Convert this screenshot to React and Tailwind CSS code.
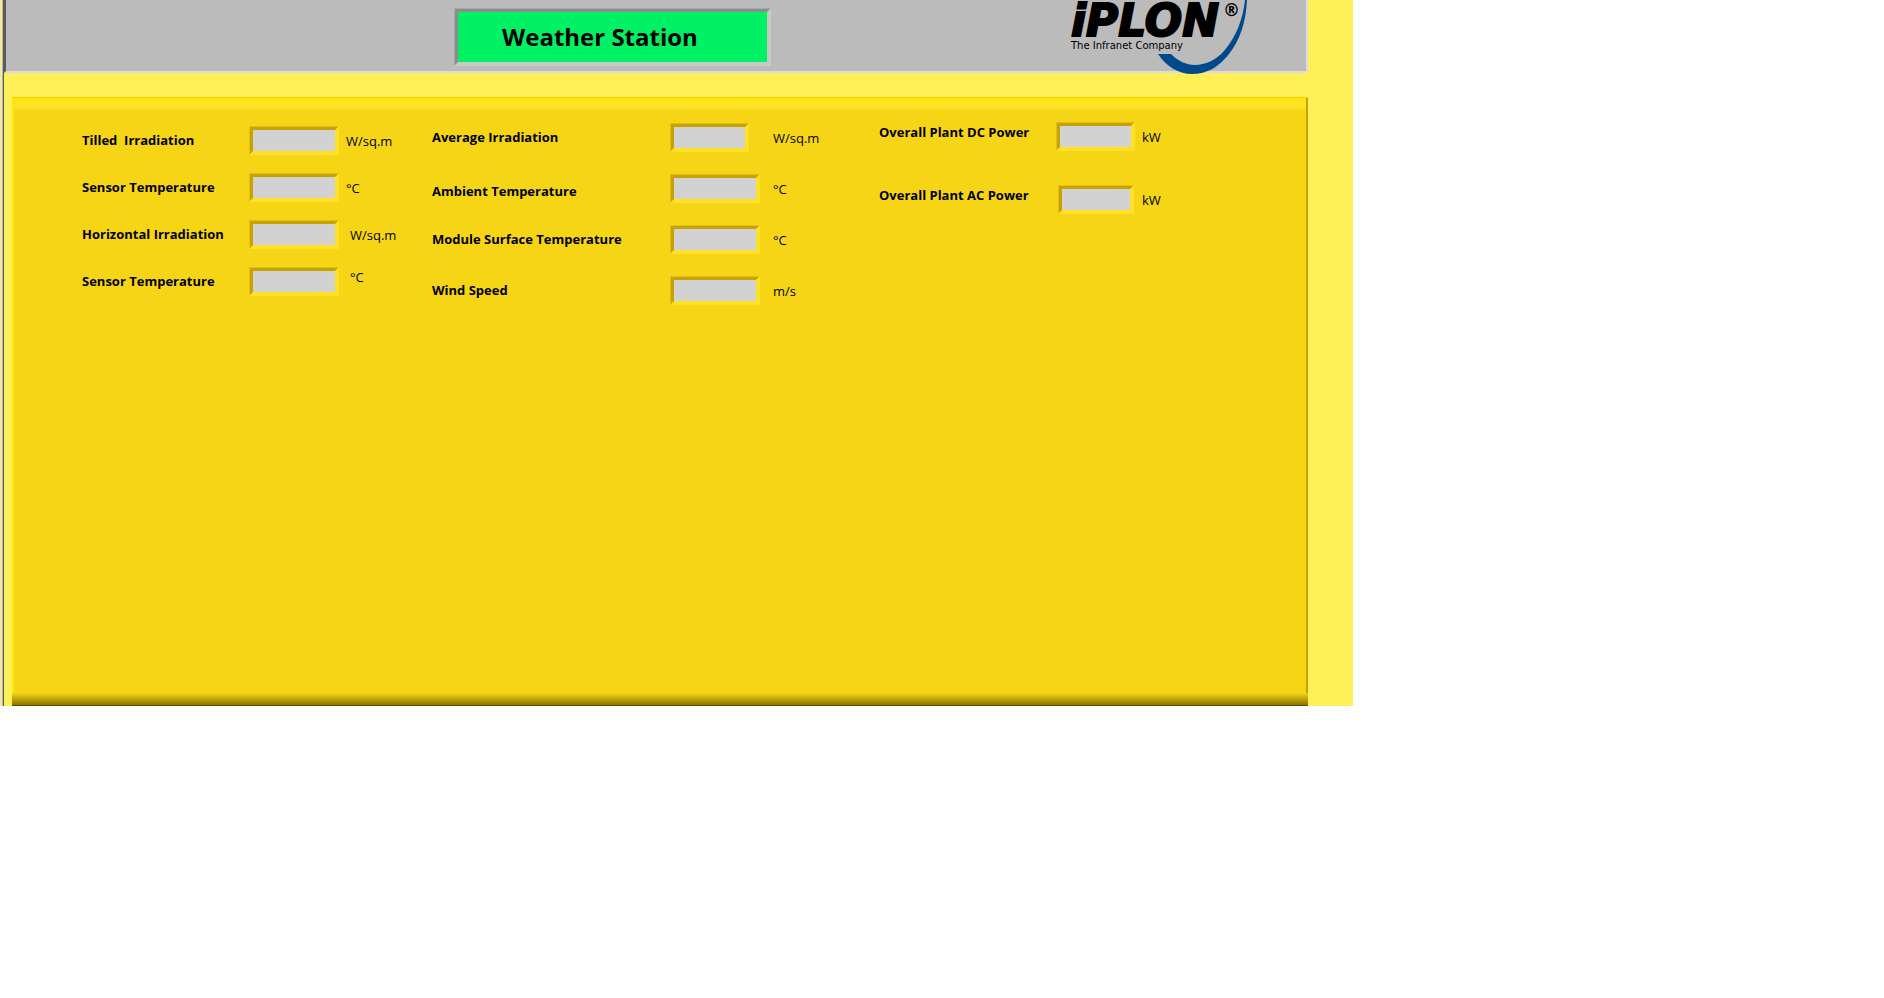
const groups = [
  {
    id: "radiation",
    column: "w-[350px] ml-[68px] mt-[27px] gap-[18px]",
    grid: "grid-cols-[167px_90px_auto]",
    unitGap: "pl-[7px]",
    rows: [
      { label: "Tilled  Irradiation", unit: "W/sq.m" },
      { label: "Sensor Temperature", unit: "°C" },
      { label: "Horizontal Irradiation", unit: "W/sq.m", unitClass: "ml-1" },
      { label: "Sensor Temperature", unit: "°C", unitClass: "ml-1 self-start" },
    ],
  },
  {
    id: "ambient",
    column: "w-[447px] mt-6 gap-[22px]",
    grid: "grid-cols-[238px_90px_auto]",
    unitGap: "pl-[13px]",
    rows: [
      { label: "Average Irradiation", unit: "W/sq.m", boxClass: "w-[79px]" },
      { label: "Ambient Temperature", unit: "°C", labelClass: "self-end" },
      { label: "Module Surface Temperature", unit: "°C" },
      { label: "Wind Speed", unit: "m/s" },
    ],
  },
  {
    id: "power",
    column: "mt-[23px] gap-[34px]",
    grid: "grid-cols-[177px_79px_auto]",
    unitGap: "pl-[7px]",
    rows: [
      { label: "Overall Plant DC Power", unit: "kW", labelClass: "self-start" },
      { label: "Overall Plant AC Power", unit: "kW", labelClass: "self-start", boxClass: "w-[76px] mx-auto" },
    ],
  },
];

function Reading({ id, row, grid, unitGap }) {
  return (
    <div className={`grid h-[29px] items-center ${grid}`}>
      <label
        htmlFor={id}
        className={`pb-0.5 text-[13px] leading-5 font-bold whitespace-pre ${row.labelClass ?? ""}`}
      >
        {row.label}
      </label>
      <div
        className={`h-[29px] border border-t-[#e3c00f] border-r-[#ffe226] border-b-[#ffe226] border-l-[#e3c00f] ${row.boxClass ?? ""}`}
      >
        <input
          id={id}
          type="text"
          readOnly
          className="block h-full w-full border-[3px] border-t-[#c6a300] border-r-[#ffe226] border-b-[#ffe226] border-l-[#c6a300] bg-[#d2d2d2] outline-none"
        />
      </div>
      <span className={`text-[13px] leading-5 whitespace-nowrap ${unitGap} ${row.unitClass ?? ""}`}>{row.unit}</span>
    </div>
  );
}

function Logo() {
  return (
    <div className="absolute top-0 right-[59px] h-[75px] w-[176px]">
      <svg className="absolute top-0 right-0" width="178" height="75" viewBox="0 0 178 75" aria-hidden="true">
        <path
          fill="#004a8c"
          d="M89 54H102C109 61 117 65 126 65C136 65 147 60 155 51C167 37 174 19 176 0H178C177 22 171 40 160 54C150 67 138 74 123 74C109 74 97 66 89 54Z"
        />
      </svg>
      <div className="relative flex h-10 items-start gap-1 font-['DejaVu_Sans',sans-serif] italic">
        <span className="text-[44px] leading-[42px] font-bold [-webkit-text-stroke:2px_black]">iPLON</span>
        <span className="text-[17px] leading-5 font-bold">®</span>
      </div>
      <div className="relative font-['DejaVu_Sans',sans-serif] text-[10px] leading-3">The Infranet Company</div>
    </div>
  );
}

export default function App() {
  return (
    <div className="min-h-screen bg-white pr-[531px] font-['Open_Sans','Noto_Sans',sans-serif] text-black">
      <div className="flex bg-[#fff05a]">
        <div className="ml-px w-px bg-[#e8e8e8]" />
        <div className="w-px bg-[#b4b4b4]" />
        <div className="w-px bg-[#5a5a5a]" />
        <div className="min-w-0 flex-1 pr-[45px]">
          <header className="relative flex h-[73px] border-r-2 border-b-2 border-l-2 border-r-[#dcdcdc] border-b-[#dcdcdc] border-l-[#5a5a5a] bg-[#bbbbbb]">
            <div className="mt-2 ml-[448px] h-[58px] w-[317px] border border-t-[#a8a8a8] border-r-[#cacaca] border-b-[#cacaca] border-l-[#a8a8a8]">
              <div className="flex h-full items-center border-[3px] border-t-[#8c8c8c] border-r-[#c8c8c8] border-b-[#c8c8c8] border-l-[#8c8c8c] bg-[#00f264] pl-[44px]">
                <h1 className="text-[24px] leading-8 font-bold whitespace-nowrap">Weather Station</h1>
              </div>
            </div>
            <Logo />
          </header>
          <main className="mt-6 ml-2 flex min-h-[609px] flex-col border-t border-t-[#f5cc05] bg-[#f6d516]">
            <div className="h-3 bg-linear-to-b from-[#ffe600] via-[#ffe628] to-[#fadb1c]" />
            <div className="-mt-3 flex flex-1 border-r-2 border-l-2 border-r-[#c9a400] border-l-[#ffe60a]">
              {groups.map((group) => (
                <section key={group.id} className={`flex flex-col pt-px ${group.column}`}>
                  {group.rows.map((row, i) => (
                    <Reading key={i} id={`${group.id}-${i}`} row={row} grid={group.grid} unitGap={group.unitGap} />
                  ))}
                </section>
              ))}
            </div>
            <div className="h-3 bg-linear-to-b from-[#f6d516] to-[#8c7500]" />
            <div className="h-px bg-[#5a4a00]" />
          </main>
        </div>
      </div>
    </div>
  );
}
